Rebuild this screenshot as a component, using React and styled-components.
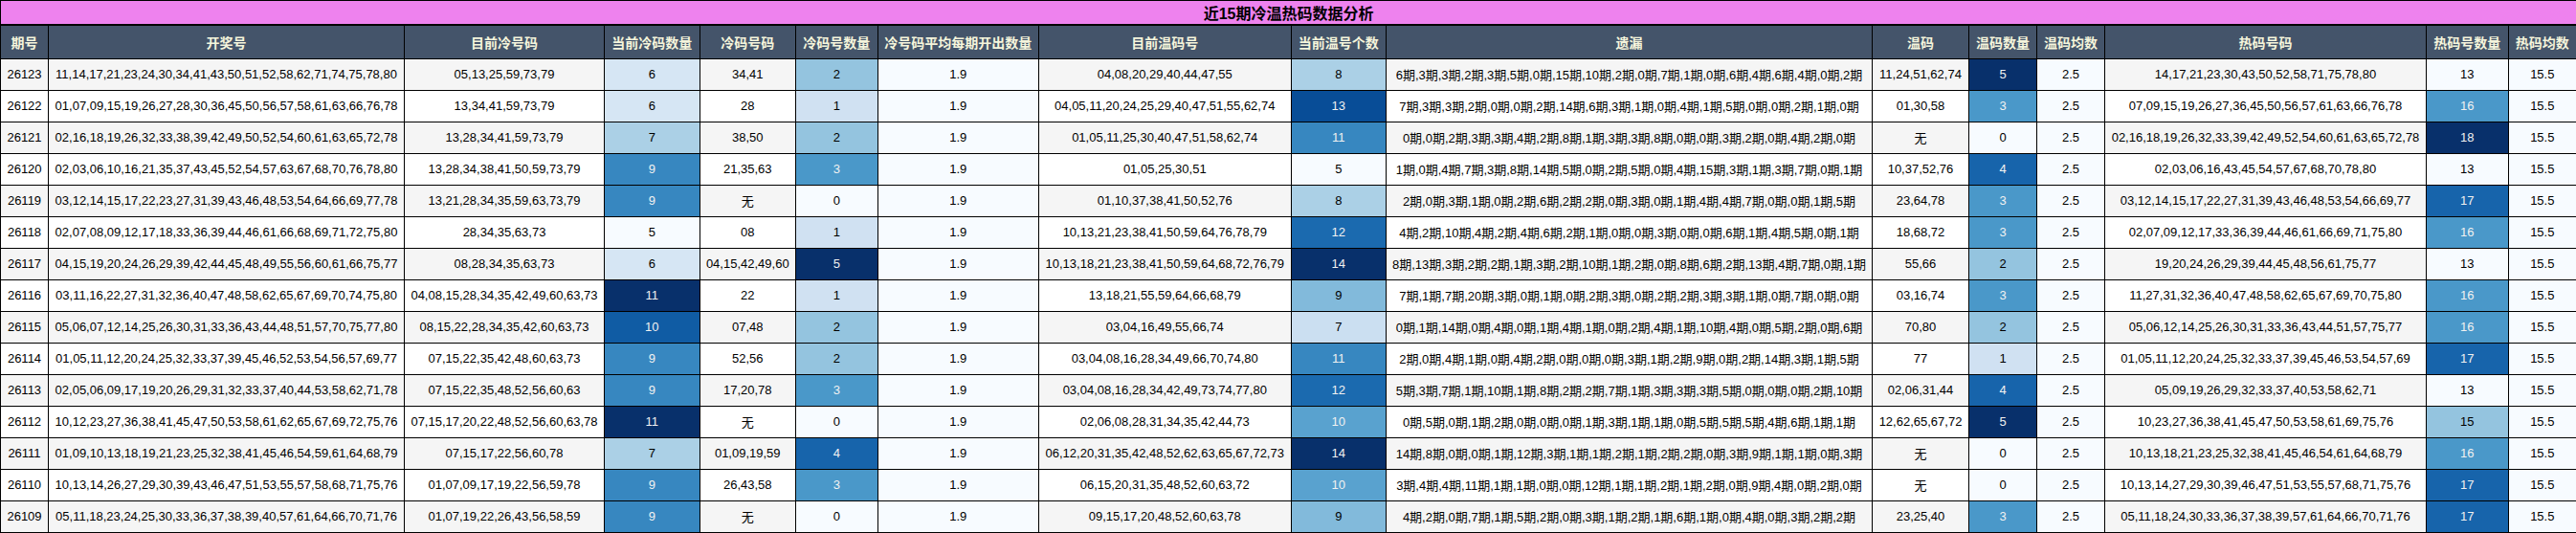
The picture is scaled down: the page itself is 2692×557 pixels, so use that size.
import React from 'react';
import styled, { createGlobalStyle, css } from 'styled-components';

const GlobalStyle = createGlobalStyle`
	html,
	body {
		margin: 0;
		padding: 0;
		background-color: #fff;
	}
`;

const BLUES = ['#f7fbff', '#deebf7', '#c6dbef', '#9ecae1', '#6baed6', '#4292c6', '#2171b5', '#08519c', '#08306b'];

const toRgb = hex => [1, 3, 5].map(i => parseInt(hex.slice(i, i + 2), 16));

// same idea as pandas background_gradient with the Blues map
const blues = t => {
	const pos = Math.min(t, 1) * (BLUES.length - 1);
	const low = Math.floor(pos);
	const high = Math.min(low + 1, BLUES.length - 1);
	const a = toRgb(BLUES[low]);
	const b = toRgb(BLUES[high]);
	return [0, 1, 2].map(i => Math.round(a[i] + (b[i] - a[i]) * (pos - low)));
};

const luminance = rgb => {
	const [r, g, b] = rgb.map(v => {
		const c = v / 255;
		return c <= 0.04045 ? c / 12.92 : Math.pow((c + 0.055) / 1.055, 2.4);
	});
	return 0.2126 * r + 0.7152 * g + 0.0722 * b;
};

const Table = styled.table`
	width: 2692px;
	table-layout: fixed;
	border-collapse: collapse;
	font-family: 'Liberation Sans', 'Noto Sans CJK SC', sans-serif;
	font-size: 13px;
	color: #000;
`;

const Title = styled.th`
	height: 25px;
	padding: 0;
	box-sizing: border-box;
	border: 1px solid #000;
	border-bottom-width: 2px;
	background-color: #ee82ee;
	color: #000;
	font-size: 16px;
	font-weight: bold;
	text-align: center;
`;

const Head = styled.th`
	height: 35px;
	padding: 0;
	box-sizing: border-box;
	border: 1px solid #000;
	background-color: #44546a;
	color: #f5f5dc;
	font-size: 14px;
	font-weight: bold;
	text-align: center;
	white-space: nowrap;
`;

const Row = styled.tr`
	background-color: ${props => (props.$even ? '#f5f5f5' : '#fff')};
`;

const Cell = styled.td`
	height: 33px;
	padding: 0;
	box-sizing: border-box;
	border: 1px solid #000;
	text-align: center;
	white-space: nowrap;

	${props =>
		props.$pale &&
		css`
			background-color: #f7fbff;
		`}

	${props =>
		props.$level !== undefined &&
		css`
			background-color: rgb(${blues(props.$level).join(',')});
			color: ${luminance(blues(props.$level)) > 0.408 ? '#000' : '#f1f1f1'};
		`}
`;

const COLUMNS = [
	['期号', 50],
	['开奖号', 372],
	['目前冷号码', 209],
	['当前冷码数量', 99.5],
	['冷码号码', 100.5],
	['冷码号数量', 85.5],
	['冷号码平均每期开出数量', 168.5],
	['目前温码号', 263.5],
	['当前温号个数', 99.5],
	['遗漏', 508],
	['温码', 101],
	['温码数量', 71],
	['温码均数', 71],
	['热码号码', 336],
	['热码号数量', 85.5],
	['热码均数', 71.5],
];

const ROWS = [
	['26123', '11,14,17,21,23,24,30,34,41,43,50,51,52,58,62,71,74,75,78,80', '05,13,25,59,73,79', 6, '34,41', 2, '04,08,20,29,40,44,47,55', 8, '6期,3期,3期,2期,3期,5期,0期,15期,10期,2期,0期,7期,1期,0期,6期,4期,6期,4期,0期,2期', '11,24,51,62,74', 5, '14,17,21,23,30,43,50,52,58,71,75,78,80', 13],
	['26122', '01,07,09,15,19,26,27,28,30,36,45,50,56,57,58,61,63,66,76,78', '13,34,41,59,73,79', 6, '28', 1, '04,05,11,20,24,25,29,40,47,51,55,62,74', 13, '7期,3期,3期,2期,0期,0期,2期,14期,6期,3期,1期,0期,4期,1期,5期,0期,0期,2期,1期,0期', '01,30,58', 3, '07,09,15,19,26,27,36,45,50,56,57,61,63,66,76,78', 16],
	['26121', '02,16,18,19,26,32,33,38,39,42,49,50,52,54,60,61,63,65,72,78', '13,28,34,41,59,73,79', 7, '38,50', 2, '01,05,11,25,30,40,47,51,58,62,74', 11, '0期,0期,2期,3期,3期,4期,2期,8期,1期,3期,3期,8期,0期,0期,3期,2期,0期,4期,2期,0期', '无', 0, '02,16,18,19,26,32,33,39,42,49,52,54,60,61,63,65,72,78', 18],
	['26120', '02,03,06,10,16,21,35,37,43,45,52,54,57,63,67,68,70,76,78,80', '13,28,34,38,41,50,59,73,79', 9, '21,35,63', 3, '01,05,25,30,51', 5, '1期,0期,4期,7期,3期,8期,14期,5期,0期,2期,5期,0期,4期,15期,3期,1期,3期,7期,0期,1期', '10,37,52,76', 4, '02,03,06,16,43,45,54,57,67,68,70,78,80', 13],
	['26119', '03,12,14,15,17,22,23,27,31,39,43,46,48,53,54,64,66,69,77,78', '13,21,28,34,35,59,63,73,79', 9, '无', 0, '01,10,37,38,41,50,52,76', 8, '2期,0期,3期,1期,0期,2期,6期,2期,2期,0期,3期,0期,1期,4期,4期,7期,0期,0期,1期,5期', '23,64,78', 3, '03,12,14,15,17,22,27,31,39,43,46,48,53,54,66,69,77', 17],
	['26118', '02,07,08,09,12,17,18,33,36,39,44,46,61,66,68,69,71,72,75,80', '28,34,35,63,73', 5, '08', 1, '10,13,21,23,38,41,50,59,64,76,78,79', 12, '4期,2期,10期,4期,2期,4期,6期,2期,1期,0期,0期,3期,0期,0期,6期,1期,4期,5期,0期,1期', '18,68,72', 3, '02,07,09,12,17,33,36,39,44,46,61,66,69,71,75,80', 16],
	['26117', '04,15,19,20,24,26,29,39,42,44,45,48,49,55,56,60,61,66,75,77', '08,28,34,35,63,73', 6, '04,15,42,49,60', 5, '10,13,18,21,23,38,41,50,59,64,68,72,76,79', 14, '8期,13期,3期,2期,2期,1期,3期,2期,10期,1期,2期,0期,8期,6期,2期,13期,4期,7期,0期,1期', '55,66', 2, '19,20,24,26,29,39,44,45,48,56,61,75,77', 13],
	['26116', '03,11,16,22,27,31,32,36,40,47,48,58,62,65,67,69,70,74,75,80', '04,08,15,28,34,35,42,49,60,63,73', 11, '22', 1, '13,18,21,55,59,64,66,68,79', 9, '7期,1期,7期,20期,3期,0期,1期,0期,2期,3期,0期,2期,2期,3期,3期,1期,0期,7期,0期,0期', '03,16,74', 3, '11,27,31,32,36,40,47,48,58,62,65,67,69,70,75,80', 16],
	['26115', '05,06,07,12,14,25,26,30,31,33,36,43,44,48,51,57,70,75,77,80', '08,15,22,28,34,35,42,60,63,73', 10, '07,48', 2, '03,04,16,49,55,66,74', 7, '0期,1期,14期,0期,4期,0期,1期,4期,1期,0期,2期,4期,1期,10期,4期,0期,5期,2期,0期,6期', '70,80', 2, '05,06,12,14,25,26,30,31,33,36,43,44,51,57,75,77', 16],
	['26114', '01,05,11,12,20,24,25,32,33,37,39,45,46,52,53,54,56,57,69,77', '07,15,22,35,42,48,60,63,73', 9, '52,56', 2, '03,04,08,16,28,34,49,66,70,74,80', 11, '2期,0期,4期,1期,0期,4期,2期,0期,0期,0期,3期,1期,2期,9期,0期,2期,14期,3期,1期,5期', '77', 1, '01,05,11,12,20,24,25,32,33,37,39,45,46,53,54,57,69', 17],
	['26113', '02,05,06,09,17,19,20,26,29,31,32,33,37,40,44,53,58,62,71,78', '07,15,22,35,48,52,56,60,63', 9, '17,20,78', 3, '03,04,08,16,28,34,42,49,73,74,77,80', 12, '5期,3期,7期,1期,10期,1期,8期,2期,2期,7期,1期,3期,3期,3期,5期,0期,0期,0期,2期,10期', '02,06,31,44', 4, '05,09,19,26,29,32,33,37,40,53,58,62,71', 13],
	['26112', '10,12,23,27,36,38,41,45,47,50,53,58,61,62,65,67,69,72,75,76', '07,15,17,20,22,48,52,56,60,63,78', 11, '无', 0, '02,06,08,28,31,34,35,42,44,73', 10, '0期,5期,0期,1期,2期,0期,0期,0期,1期,3期,1期,1期,0期,5期,5期,5期,4期,6期,1期,1期', '12,62,65,67,72', 5, '10,23,27,36,38,41,45,47,50,53,58,61,69,75,76', 15],
	['26111', '01,09,10,13,18,19,21,23,25,32,38,41,45,46,54,59,61,64,68,79', '07,15,17,22,56,60,78', 7, '01,09,19,59', 4, '06,12,20,31,35,42,48,52,62,63,65,67,72,73', 14, '14期,8期,0期,0期,1期,12期,3期,1期,1期,2期,1期,2期,2期,0期,3期,9期,1期,1期,0期,3期', '无', 0, '10,13,18,21,23,25,32,38,41,45,46,54,61,64,68,79', 16],
	['26110', '10,13,14,26,27,29,30,39,43,46,47,51,53,55,57,58,68,71,75,76', '01,07,09,17,19,22,56,59,78', 9, '26,43,58', 3, '06,15,20,31,35,48,52,60,63,72', 10, '3期,4期,4期,11期,1期,1期,0期,0期,12期,1期,1期,2期,1期,2期,0期,9期,4期,0期,2期,0期', '无', 0, '10,13,14,27,29,30,39,46,47,51,53,55,57,68,71,75,76', 17],
	['26109', '05,11,18,23,24,25,30,33,36,37,38,39,40,57,61,64,66,70,71,76', '01,07,19,22,26,43,56,58,59', 9, '无', 0, '09,15,17,20,48,52,60,63,78', 9, '4期,2期,0期,7期,1期,5期,2期,0期,3期,1期,2期,1期,6期,1期,0期,4期,0期,3期,2期,2期', '23,25,40', 3, '05,11,18,24,30,33,36,37,38,39,57,61,64,66,70,71,76', 17],
];

const scale = (value, min, max) => (value - min) / (max - min);

const App = () => (
	<>
		<GlobalStyle />
		<Table>
			<colgroup>
				{COLUMNS.map(([name, width]) => (
					<col key={name} width={width} />
				))}
			</colgroup>
			<thead>
				<tr>
					<Title colSpan={COLUMNS.length}>近15期冷温热码数据分析</Title>
				</tr>
				<tr>
					{COLUMNS.map(([name]) => (
						<Head key={name}>{name}</Head>
					))}
				</tr>
			</thead>
			<tbody>
				{ROWS.map((r, i) => (
					<Row key={r[0]} $even={i % 2 === 0}>
						<Cell>{r[0]}</Cell>
						<Cell>{r[1]}</Cell>
						<Cell>{r[2]}</Cell>
						<Cell $level={scale(r[3], 5, 11)}>{r[3]}</Cell>
						<Cell>{r[4]}</Cell>
						<Cell $level={scale(r[5], 0, 5)}>{r[5]}</Cell>
						<Cell $pale>1.9</Cell>
						<Cell>{r[6]}</Cell>
						<Cell $level={scale(r[7], 5, 14)}>{r[7]}</Cell>
						<Cell>{r[8]}</Cell>
						<Cell>{r[9]}</Cell>
						<Cell $level={scale(r[10], 0, 5)}>{r[10]}</Cell>
						<Cell $pale>2.5</Cell>
						<Cell>{r[11]}</Cell>
						<Cell $level={scale(r[12], 13, 18)}>{r[12]}</Cell>
						<Cell $pale>15.5</Cell>
					</Row>
				))}
			</tbody>
		</Table>
	</>
);

export default App;
